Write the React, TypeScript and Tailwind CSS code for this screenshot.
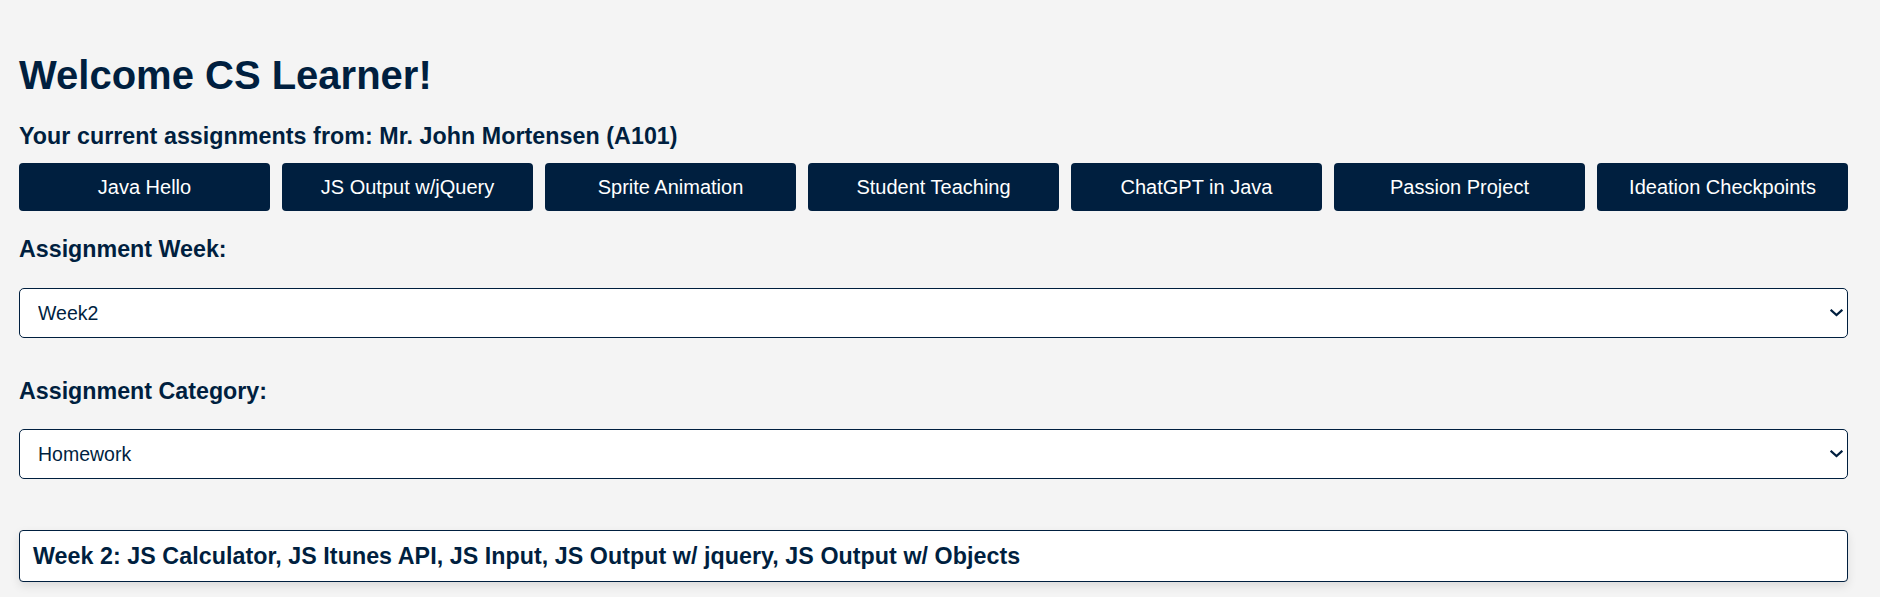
import React from "react";

const assignments = [
  "Java Hello",
  "JS Output w/jQuery",
  "Sprite Animation",
  "Student Teaching",
  "ChatGPT in Java",
  "Passion Project",
  "Ideation Checkpoints",
];

function Chevron() {
  return (
    <svg
      className="pointer-events-none absolute right-[5px] top-1/2 -translate-y-1/2"
      width="13"
      height="8"
      viewBox="0 0 13 8"
      fill="none"
    >
      <polyline
        points="1.5,1.5 6.5,6 11.5,1.5"
        stroke="#001f3f"
        strokeWidth="2.2"
        strokeLinecap="square"
        strokeLinejoin="miter"
      />
    </svg>
  );
}

function Select({ value, className }: { value: string; className: string }) {
  return (
    <div className={"relative " + className}>
      <select
        defaultValue={value}
        className="block h-[50px] w-full appearance-none rounded-[5px] border border-[#001f3f] bg-white pl-[18px] text-[19.5px] leading-[22px] text-[#001f3f] outline-none"
      >
        <option>{value}</option>
      </select>
      <Chevron />
    </div>
  );
}

export default function App() {
  return (
    <div className="min-h-screen bg-[#f4f4f4] pl-[19px] pr-[32px] pt-[55px] font-['Liberation_Sans',Arial,sans-serif] text-[#001f3f]">
      <h1 className="text-[40px] font-bold leading-[40px]">Welcome CS Learner!</h1>
      <h3 className="mt-[30px] text-[23.25px] font-bold leading-[23.25px] tracking-[0.05px]">
        Your current assignments from: Mr. John Mortensen (A101)
      </h3>
      <div className="mt-[14.75px] grid grid-cols-7 gap-[12px]">
        {assignments.map((a) => (
          <button
            key={a}
            className="flex h-[48px] items-center justify-center rounded-[4px] bg-[#001f3f] text-[20px] leading-[20px] text-white"
          >
            {a}
          </button>
        ))}
      </div>
      <label className="mt-[26.7px] block text-[23.25px] font-bold leading-[23.25px]">
        Assignment Week:
      </label>
      <Select value="Week2" className="mt-[27px]" />
      <label className="mt-[42.3px] block text-[23.25px] font-bold leading-[23.25px]">
        Assignment Category:
      </label>
      <Select value="Homework" className="mt-[25.5px]" />
      <div className="mt-[51.5px] flex h-[52px] items-center rounded-[4px] border border-[#001f3f] bg-white pl-[13px] shadow-[0_4px_10px_rgba(0,0,0,0.1)]">
        <h3 className="text-[23.25px] font-bold leading-[23.25px] tracking-[0.05px]">
          Week 2: JS Calculator, JS Itunes API, JS Input, JS Output w/ jquery, JS Output w/ Objects
        </h3>
      </div>
    </div>
  );
}
